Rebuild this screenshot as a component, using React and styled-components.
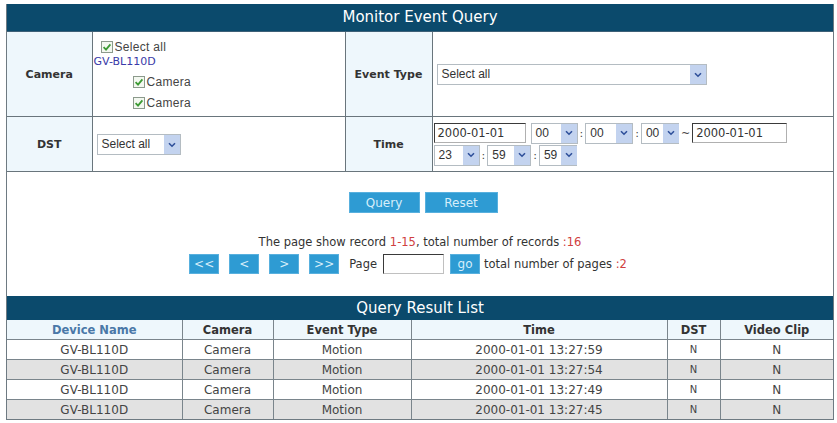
import styled, { createGlobalStyle } from "styled-components";

const GlobalStyle = createGlobalStyle`
  html, body {
    margin: 0;
    padding: 0;
    background: #ffffff;
  }
  body {
    font-family: "DejaVu Sans", Verdana, sans-serif;
    color: #333333;
  }
`;

const records = [
  { device: "GV-BL110D", camera: "Camera", type: "Motion", time: "2000-01-01 13:27:59", dst: "N", clip: "N" },
  { device: "GV-BL110D", camera: "Camera", type: "Motion", time: "2000-01-01 13:27:54", dst: "N", clip: "N" },
  { device: "GV-BL110D", camera: "Camera", type: "Motion", time: "2000-01-01 13:27:49", dst: "N", clip: "N" },
  { device: "GV-BL110D", camera: "Camera", type: "Motion", time: "2000-01-01 13:27:45", dst: "N", clip: "N" },
];

function Check() {
  return (
    <CheckBox viewBox="0 0 12 12">
      <rect x="0.5" y="0.5" width="11" height="11" fill="#f3f8f0" stroke="#8c9a8c" />
      <path d="M2.6 6.2 L5 8.6 L9.4 3.4" fill="none" stroke="#3c9a34" strokeWidth="1.8" />
    </CheckBox>
  );
}

function Select({ value, width }) {
  return (
    <SelectBox $width={width}>
      <span>{value}</span>
      <Arrow>
        <svg width="8" height="6" viewBox="0 0 8 6">
          <path d="M1 1.2 L4 4.2 L7 1.2" fill="none" stroke="#2e4f9a" strokeWidth="1.6" />
        </svg>
      </Arrow>
    </SelectBox>
  );
}

export default function App() {
  return (
    <>
      <GlobalStyle />
      <Frame>
        <TitleBar>Monitor Event Query</TitleBar>
        <FormTable>
          <colgroup>
            <col style={{ width: 85 }} />
            <col style={{ width: 253 }} />
            <col style={{ width: 87 }} />
            <col style={{ width: 401 }} />
          </colgroup>
          <tbody>
            <tr>
              <Label $h={84}>Camera</Label>
              <Field>
                <CamList>
                  <CheckRow>
                    <Check />
                    Select all
                  </CheckRow>
                  <DeviceLink>GV-BL110D</DeviceLink>
                  <CheckRow $indent>
                    <Check />
                    Camera
                  </CheckRow>
                  <CheckRow $indent>
                    <Check />
                    Camera
                  </CheckRow>
                </CamList>
              </Field>
              <Label>Event Type</Label>
              <Field>
                <Select value="Select all" width={270} />
              </Field>
            </tr>
            <tr>
              <Label $h={54}>DST</Label>
              <Field>
                <Select value="Select all" width={84} />
              </Field>
              <Label>Time</Label>
              <Field $tight>
                <TimeLine>
                  <DateInput>2000-01-01</DateInput>
                  <Select value="00" width={47} />
                  <Sep>:</Sep>
                  <Select value="00" width={48} />
                  <Sep>:</Sep>
                  <Select value="00" width={38} />
                  <Sep>~</Sep>
                  <DateInput $w={95}>2000-01-01</DateInput>
                </TimeLine>
                <TimeLine>
                  <Select value="23" width={46} />
                  <Sep>:</Sep>
                  <Select value="59" width={44} />
                  <Sep>:</Sep>
                  <Select value="59" width={38} />
                </TimeLine>
              </Field>
            </tr>
          </tbody>
        </FormTable>

        <Actions>
          <ButtonRow>
            <BlueButton $w={71}>Query</BlueButton>
            <BlueButton $w={73}>Reset</BlueButton>
          </ButtonRow>
          <Summary>
            The page show record <Red>1-15</Red>, total number of records <Red>:16</Red>
          </Summary>
          <Pager>
            <BlueButton $w={30} $h={20}>&lt;&lt;</BlueButton>
            <BlueButton $w={30} $h={20}>&lt;</BlueButton>
            <BlueButton $w={30} $h={20}>&gt;</BlueButton>
            <BlueButton $w={30} $h={20}>&gt;&gt;</BlueButton>
            <PagerText>Page</PagerText>
            <PageInput />
            <GoButton>go</GoButton>
            <PagerText $after>
              total number of pages <Red>:2</Red>
            </PagerText>
          </Pager>
        </Actions>

        <ResultBar>Query Result List</ResultBar>
        <ResultTable>
          <colgroup>
            <col style={{ width: 175 }} />
            <col style={{ width: 91 }} />
            <col style={{ width: 138 }} />
            <col style={{ width: 256 }} />
            <col style={{ width: 53 }} />
            <col style={{ width: 113 }} />
          </colgroup>
          <thead>
            <tr>
              <HeadCell $link>Device Name</HeadCell>
              <HeadCell>Camera</HeadCell>
              <HeadCell>Event Type</HeadCell>
              <HeadCell>Time</HeadCell>
              <HeadCell>DST</HeadCell>
              <HeadCell>Video Clip</HeadCell>
            </tr>
          </thead>
          <tbody>
            {records.map((r, i) => (
              <DataRow key={i} $odd={i % 2 === 1}>
                <td>{r.device}</td>
                <td>{r.camera}</td>
                <td>{r.type}</td>
                <td>{r.time}</td>
                <SmallCell>{r.dst}</SmallCell>
                <td>{r.clip}</td>
              </DataRow>
            ))}
          </tbody>
        </ResultTable>
      </Frame>
    </>
  );
}

const Frame = styled.div`
  width: 826px;
  margin: 4px 0 0 6px;
  border-left: 1px solid #6e7a82;
  border-right: 1px solid #6e7a82;
  border-bottom: 1px solid #6e7a82;
`;

const TitleBar = styled.div`
  height: 27px;
  background: #0b4a6c;
  color: #ffffff;
  font-size: 15px;
  line-height: 27px;
  text-align: center;
  border-bottom: 1px solid #3d6077;
`;

const FormTable = styled.table`
  width: 826px;
  table-layout: fixed;
  border-collapse: collapse;
  td {
    border: 1px solid #69757c;
    padding: 0;
  }
  tr td:first-child {
    border-left: none;
  }
  tr td:last-child {
    border-right: none;
  }
  tr:first-child td {
    border-top: none;
  }
`;

const Label = styled.td`
  height: ${(p) => (p.$h ? `${p.$h}px` : "auto")};
  background: #eef7fc;
  font-weight: bold;
  font-size: 11px;
  color: #333333;
  text-align: center;
  vertical-align: middle;
`;

const Field = styled.td`
  background: #ffffff;
  vertical-align: middle;
  padding-left: ${(p) => (p.$tight ? "1px" : "4px")} !important;
`;

const CamList = styled.div`
  display: flex;
  flex-direction: column;
  align-items: flex-start;
  padding: 4px 0 0 0;
`;

const CheckRow = styled.div`
  display: flex;
  align-items: center;
  gap: 2px;
  height: ${(p) => (p.$indent ? "20px" : "16px")};
  margin-top: ${(p) => (p.$indent ? "1px" : "0")};
  margin-left: ${(p) => (p.$indent ? "36px" : "4px")};
  font-family: "Liberation Sans", Arial, sans-serif;
  font-size: 12px;
  color: #444444;
  letter-spacing: 0.3px;
`;

const CheckBox = styled.svg`
  width: 12px;
  height: 12px;
  flex: none;
`;

const DeviceLink = styled.div`
  font-size: 11px;
  color: #3a3aa8;
  height: 16px;
  line-height: 14px;
  margin-left: -3px;
`;

const SelectBox = styled.div`
  display: inline-flex;
  align-items: stretch;
  justify-content: space-between;
  box-sizing: border-box;
  width: ${(p) => p.$width}px;
  height: 21px;
  border: 1px solid #b4bcc2;
  background: #ffffff;
  font-family: "Liberation Sans", Arial, sans-serif;
  font-size: 12px;
  color: #333333;
  flex: none;
  span {
    padding: 0 4px;
    line-height: 19px;
    white-space: nowrap;
  }
`;

const Arrow = styled.div`
  width: 16px;
  background: #c3d3ef;
  display: flex;
  align-items: center;
  justify-content: center;
  flex: none;
`;

const TimeLine = styled.div`
  display: flex;
  align-items: center;
  gap: 1px;
  height: 22px;
`;

const DateInput = styled.div`
  box-sizing: border-box;
  width: ${(p) => p.$w || 92}px;
  height: 20px;
  margin-right: 4px;
  border: 1px solid #3a3a3a;
  border-right-color: #b0b0b0;
  border-bottom-color: #b0b0b0;
  padding-left: 3px;
  font-size: 11.5px;
  line-height: 18px;
  color: #333333;
  flex: none;
`;

const Sep = styled.span`
  font-size: 11px;
  color: #444444;
  padding: 0 1px;
`;

const Actions = styled.div`
  height: 124px;
  display: flex;
  flex-direction: column;
  align-items: center;
  padding-top: 20px;
  box-sizing: border-box;
`;

const ButtonRow = styled.div`
  display: flex;
  gap: 5px;
  margin-left: 6px;
`;

const BlueButton = styled.div`
  width: ${(p) => p.$w}px;
  height: ${(p) => p.$h || 21}px;
  background: #2e9bd3;
  color: #d6eefa;
  font-size: 12px;
  display: flex;
  align-items: center;
  justify-content: center;
  border: 1px solid #58b0de;
  box-sizing: border-box;
`;

const GoButton = styled(BlueButton).attrs({ $w: 30, $h: 20 })`
  margin-left: -4px;
`;

const Summary = styled.div`
  margin-top: 22px;
  font-size: 11.5px;
  color: #333333;
  line-height: 15px;
`;

const Red = styled.span`
  color: #d04040;
`;

const Pager = styled.div`
  display: flex;
  align-items: center;
  gap: 10px;
  margin-top: 4px;
  margin-right: 24px;
`;

const PagerText = styled.span`
  font-size: 11.5px;
  color: #333333;
  margin-left: ${(p) => (p.$after ? "-6px" : "0")};
  margin-right: ${(p) => (p.$after ? "0" : "-4px")};
`;

const PageInput = styled.div`
  box-sizing: border-box;
  width: 61px;
  height: 20px;
  border: 1px solid #3a3a3a;
  border-right-color: #c0c0c0;
  border-bottom-color: #c0c0c0;
`;

const ResultBar = styled.div`
  height: 24px;
  background: #0b4a6c;
  color: #ffffff;
  font-size: 15px;
  line-height: 24px;
  text-align: center;
`;

const ResultTable = styled.table`
  width: 826px;
  table-layout: fixed;
  border-collapse: collapse;
  td, th {
    border: 1px solid #7a858c;
    padding: 0;
    text-align: center;
    height: 19px;
  }
  tr td:first-child, tr th:first-child {
    border-left: none;
  }
  tr td:last-child, tr th:last-child {
    border-right: none;
  }
  tr:last-child td {
    border-bottom: none;
  }
  thead th {
    border-top: none;
  }
`;

const HeadCell = styled.th`
  background: #eef7fc;
  font-size: 11.5px;
  font-weight: bold;
  color: ${(p) => (p.$link ? "#4a78a8" : "#333333")};
`;

const DataRow = styled.tr`
  background: ${(p) => (p.$odd ? "#e2e2e2" : "#ffffff")};
  td {
    font-size: 12px;
    color: #444444;
  }
`;

const SmallCell = styled.td`
  font-size: 10px !important;
`;
